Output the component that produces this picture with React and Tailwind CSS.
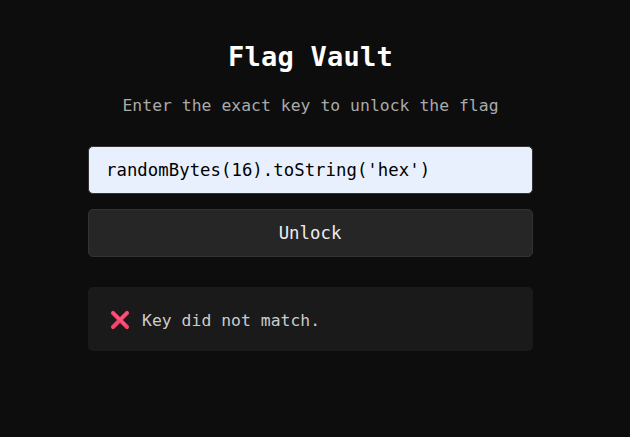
import React from 'react';

function CrossMark() {
  return (
    <svg className="h-[20px] w-[20px] shrink-0" viewBox="0 0 20 20" aria-hidden="true">
      <path d="M3 3 17 17M17 3 3 17" stroke="#f8416b" strokeWidth="4.2" strokeLinecap="round" fill="none" />
      <path d="M3.1 2.7 10 9.6 16.9 2.7M10 9.6 15 14.5" stroke="#ff5580" strokeWidth="1.8" strokeLinecap="round" fill="none" />
    </svg>
  );
}

export default function App() {
  return (
    <main className="flex h-[437px] w-full flex-col items-center bg-[#0d0d0d] pl-[88px] pr-[97px] font-['Consolas','DejaVu_Sans_Mono',monospace]">
      <h1 className="mt-[38px] h-[38px] whitespace-nowrap text-[27px] leading-[38px] font-bold tracking-[0.25px] text-white">Flag Vault</h1>
      <p className="mt-[18px] h-6 whitespace-nowrap text-[16.4px] leading-6 tracking-[0.03px] text-[#aaaaaa]">Enter the exact key to unlock the flag</p>
      <input
        type="text"
        defaultValue="randomBytes(16).toString('hex')"
        className="mt-[28px] h-12 w-full rounded-[5px] border border-[#333333] bg-[#e8f0fe] px-[17px] text-[17.3px] tracking-[0.05px] text-black outline-none"
      />
      <button type="button" className="mt-[15px] h-12 w-full rounded-[5px] border border-[#333333] bg-[#262626] pt-[2px] pr-px text-[17.3px] tracking-[0.05px] text-[#eeeeee]">
        Unlock
      </button>
      <div className="mt-[30px] flex h-16 w-full items-center gap-[12px] rounded-[5px] bg-[#1a1a1a] pt-[2px] pl-[22px] text-[16.4px] tracking-[0.03px] text-[#cccccc]">
        <CrossMark />
        <span className="pt-[2px]">Key did not match.</span>
      </div>
    </main>
  );
}
